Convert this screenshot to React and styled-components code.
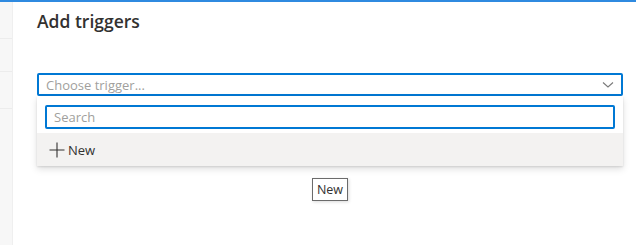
import React from "react";
import styled, { createGlobalStyle } from "styled-components";

const GlobalStyle = createGlobalStyle`
  html, body {
    margin: 0;
    padding: 0;
    background: #ffffff;
    font-family: "Open Sans", "Noto Sans", sans-serif;
    color: #323130;
  }
`;

const Page = styled.div`
  display: flex;
  width: 636px;
  height: 248px;
  border-top: 2px solid #2f8ae0;
  box-sizing: border-box;
  overflow: hidden;
`;

const Sidebar = styled.div`
  width: 12px;
  height: 243px;
  background: #f7f7f7;
  border-right: 1px solid #efefef;
  display: flex;
  flex-direction: column;
`;

const SideRow = styled.div`
  height: ${(p) => p.h}px;
  border-bottom: 1px solid #ececec;
  box-sizing: border-box;
`;

const Panel = styled.div`
  position: relative;
  flex: 1;
  padding: 7px 12px 0 24px;
`;

const Title = styled.h2`
  margin: 0;
  font-size: 17.5px;
  font-weight: 600;
  line-height: 24px;
  color: #323130;
`;

const Field = styled.div`
  margin-top: 40px;
  width: 586px;
`;

const Dropdown = styled.div`
  height: 23px;
  box-sizing: border-box;
  border: 2px solid #0078d4;
  border-radius: 2px;
  display: flex;
  align-items: center;
  justify-content: space-between;
  padding: 0 7px;
`;

const Placeholder = styled.span`
  font-size: 13px;
  color: #a19f9d;
  line-height: 18px;
`;

const Menu = styled.div`
  background: #ffffff;
  box-shadow: 0 3.2px 7.2px rgba(0, 0, 0, 0.13), 0 0.6px 1.8px rgba(0, 0, 0, 0.11);
  display: flex;
  flex-direction: column;
`;

const SearchWrap = styled.div`
  padding: 9px 8px 4px 8px;
`;

const SearchBox = styled.div`
  height: 24px;
  box-sizing: border-box;
  border: 2px solid #0078d4;
  border-radius: 2px;
  display: flex;
  align-items: center;
  padding: 0 7px;
`;

const Item = styled.div`
  height: 33px;
  background: ${(p) => (p.hover ? "#f3f2f1" : "transparent")};
  display: flex;
  align-items: center;
  padding: 0 12px;
  gap: 3px;
  font-size: 13px;
  color: #323130;
`;

const Tooltip = styled.div`
  position: absolute;
  left: 299px;
  top: 176px;
  width: 36px;
  height: 23px;
  box-sizing: border-box;
  border: 1px solid #6b6b6b;
  background: #ffffff;
  box-shadow: 1px 1px 3px rgba(0, 0, 0, 0.15);
  font-size: 12.5px;
  display: flex;
  align-items: center;
  justify-content: center;
  color: #323130;
`;

const Chevron = () => (
  <svg width="12" height="8" viewBox="0 0 12 8">
    <path d="M1 1.5 L6 6 L11 1.5" fill="none" stroke="#7a7a7a" strokeWidth="1.1" />
  </svg>
);

const Plus = () => (
  <svg width="16" height="16" viewBox="0 0 16 16">
    <path d="M8 0.5 V15.5 M0.5 8 H15.5" stroke="#323130" strokeWidth="1.1" />
  </svg>
);

export default function App() {
  return (
    <>
      <GlobalStyle />
      <Page>
        <Sidebar>
          <SideRow h={37} />
          <SideRow h={33} />
          <SideRow h={37} />
        </Sidebar>
        <Panel>
          <Title>Add triggers</Title>
          <Field>
            <Dropdown>
              <Placeholder>Choose trigger...</Placeholder>
              <Chevron />
            </Dropdown>
            <Menu>
              <SearchWrap>
                <SearchBox>
                  <Placeholder>Search</Placeholder>
                </SearchBox>
              </SearchWrap>
              <Item hover>
                <Plus />
                New
              </Item>
            </Menu>
          </Field>
          <Tooltip>New</Tooltip>
        </Panel>
      </Page>
    </>
  );
}
